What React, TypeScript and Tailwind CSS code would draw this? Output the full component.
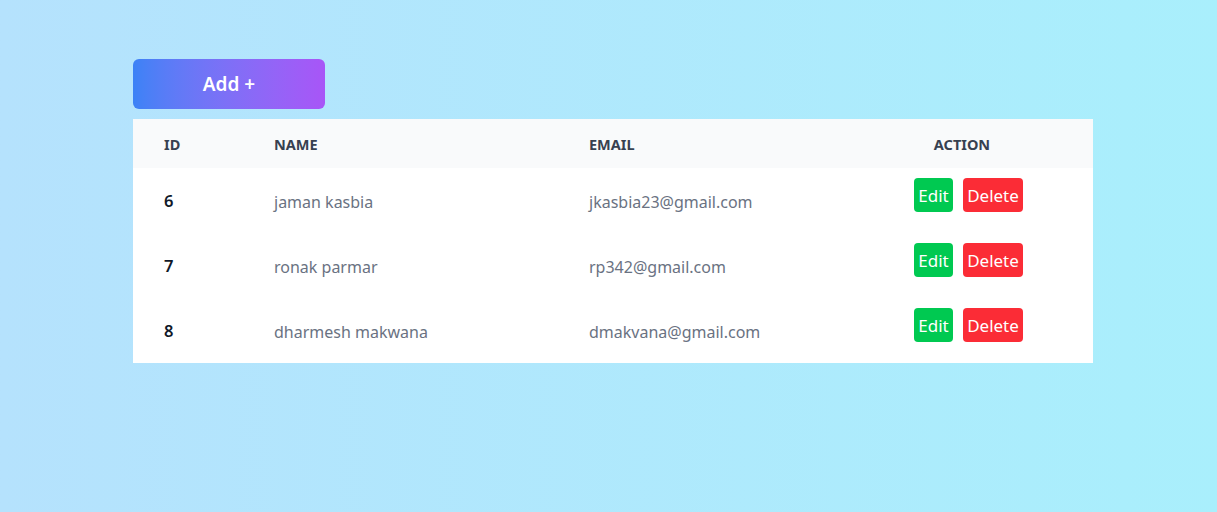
const users = [
  { id: 6, name: 'jaman kasbia', email: 'jkasbia23@gmail.com' },
  { id: 7, name: 'ronak parmar', email: 'rp342@gmail.com' },
  { id: 8, name: 'dharmesh makwana', email: 'dmakvana@gmail.com' },
];

export default function App() {
  return (
    <div
      className="min-h-screen w-full bg-gradient-to-r from-[#b5e2fd] to-[#a9effc] pt-[59px] pl-[133px]"
      style={{ fontFamily: '"Noto Sans", "Open Sans", sans-serif' }}
    >
      <button className="w-[192px] h-[50px] rounded-md bg-gradient-to-r from-[#3b82f6] to-[#a855f7] text-white text-[19px] font-semibold pt-[1px]">
        Add +
      </button>
      <table className="mt-[10px] w-[960px] bg-white text-left border-collapse">
        <thead className="bg-gray-50 text-[14.5px] font-bold uppercase text-[#374151]">
          <tr className="h-[49px]">
            <th className="w-[110px] pl-[31px] pt-[2px]">ID</th>
            <th className="w-[315px] pl-[31px] pt-[2px]">Name</th>
            <th className="w-[273px] pl-[31px] pt-[2px]">Email</th>
            <th className="text-center pt-[2px]">Action</th>
          </tr>
        </thead>
        <tbody className="text-base">
          {users.map((user) => (
            <tr key={user.id} className="h-[65px]">
              <td className="pl-[31px] pt-[2px] text-[16.5px] font-semibold text-gray-900">{user.id}</td>
              <td className="pl-[31px] pt-[2px] text-gray-500">{user.name}</td>
              <td className="pl-[31px] pt-[2px] text-gray-500">{user.email}</td>
              <td>
                <div className="flex justify-center gap-[10px] pl-[13px] mb-[11px] text-[17px]">
                  <button className="h-[34px] w-[39px] rounded bg-green-500 text-white pt-[1px]">
                    Edit
                  </button>
                  <button className="h-[34px] w-[60px] rounded bg-red-500 text-white pt-[1px]">
                    Delete
                  </button>
                </div>
              </td>
            </tr>
          ))}
        </tbody>
      </table>
    </div>
  );
}
